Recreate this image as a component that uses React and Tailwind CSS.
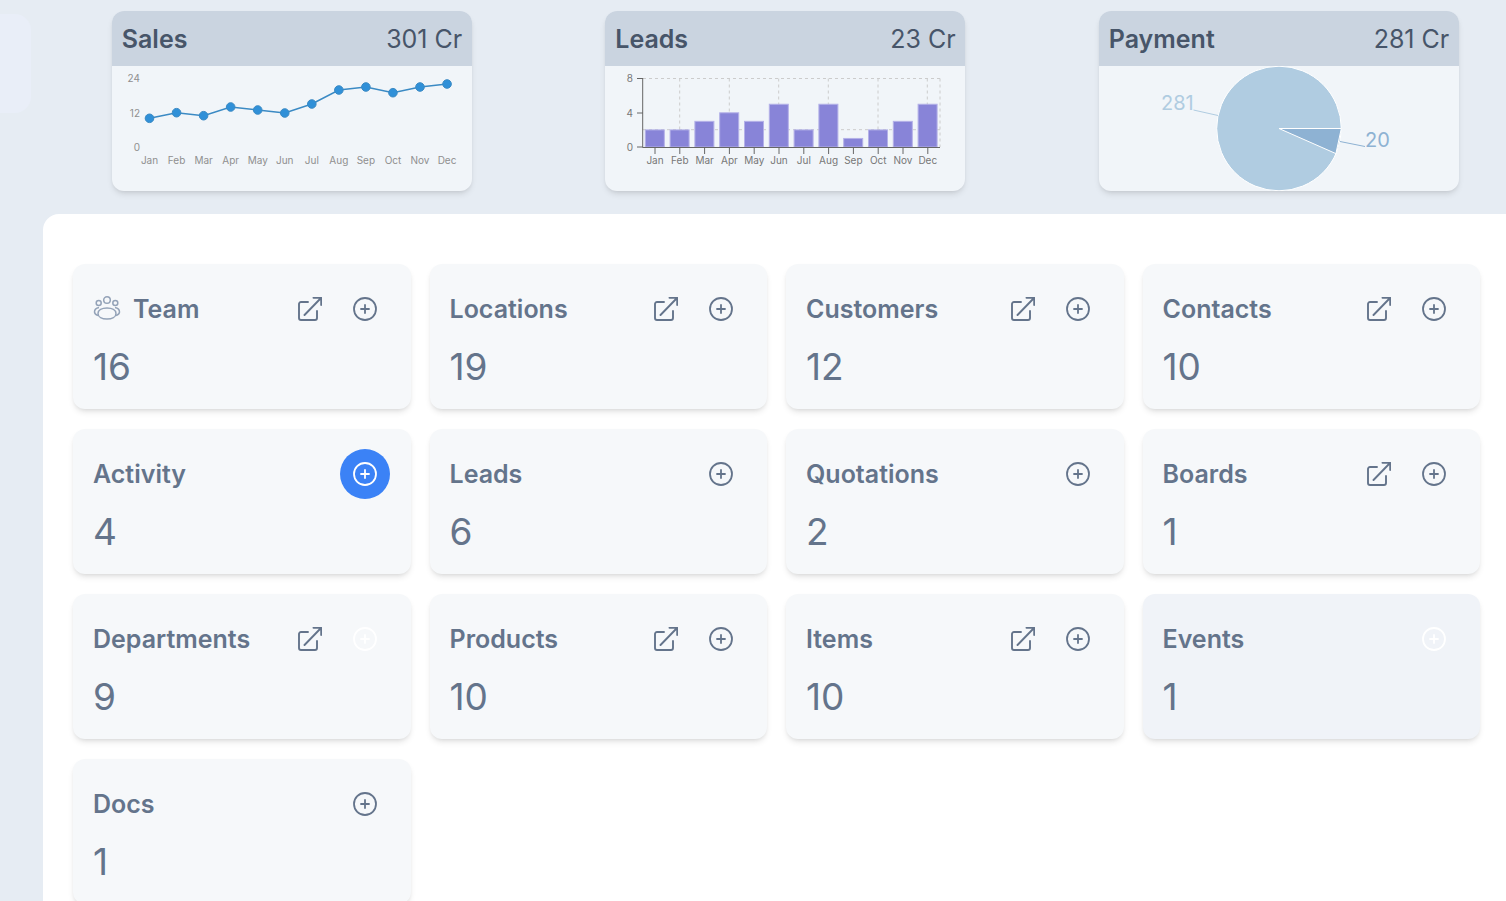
import React from "react";

const months = ["Jan", "Feb", "Mar", "Apr", "May", "Jun", "Jul", "Aug", "Sep", "Oct", "Nov", "Dec"];
const sales = [118.3, 112.7, 115.7, 107, 110, 113, 104, 90, 87, 92.7, 87, 84];
const leads = [2, 2, 3, 4, 3, 5, 2, 5, 1, 2, 3, 5];

const cards = [
  { title: "Team", count: 16, edit: true, team: true },
  { title: "Locations", count: 19, edit: true },
  { title: "Customers", count: 12, edit: true },
  { title: "Contacts", count: 10, edit: true },
  { title: "Activity", count: 4, active: true },
  { title: "Leads", count: 6 },
  { title: "Quotations", count: 2 },
  { title: "Boards", count: 1, edit: true },
  { title: "Departments", count: 9, edit: true, faded: true },
  { title: "Products", count: 10, edit: true },
  { title: "Items", count: 10, edit: true },
  { title: "Events", count: 1, faded: true, dim: true },
  { title: "Docs", count: 1 },
];

const PlusCircle = () => (
  <svg viewBox="0 0 24 24" fill="none" stroke="currentColor" strokeWidth="1.8" strokeLinecap="round" className="w-6 h-6">
    <circle cx="12" cy="12" r="11" />
    <path d="M12 8v8M8 12h8" />
  </svg>
);

const EditIcon = () => (
  <svg viewBox="0 0 24 24" fill="none" stroke="currentColor" strokeWidth="1.9" strokeLinecap="round" strokeLinejoin="round" className="w-6 h-6">
    <path d="M10 5H3a2 2 0 0 0-2 2v14a2 2 0 0 0 2 2h14a2 2 0 0 0 2-2v-7" />
    <path d="M6.500 18 23 1M15.500 .8H23.200V8" />
  </svg>
);

const TeamIcon = () => (
  <svg viewBox="0 0 28 24" fill="none" stroke="currentColor" strokeWidth="1.5" className="w-7 h-6 text-[#94a3b8] overflow-visible">
    <circle cx="14" cy="3" r="3.300" />
    <circle cx="5.700" cy="6" r="2.500" />
    <circle cx="22.300" cy="6" r="2.500" />
    <path d="M5 16.500c0-3.500 4-5.500 9-5.500s9 2 9 5.500-4 5.500-9 5.500-9-2-9-5.500Z" />
    <path d="M6 10.500C3.500 11 1.500 13 1.500 15c0 1.500 1.300 2.700 3.500 3.500M22 10.500c2.500.5 4.500 2.500 4.500 4.500 0 1.500-1.300 2.700-3.500 3.500" />
  </svg>
);

const ChartCard = ({ title, value, children }) => (
  <div className="w-[360px] h-[180px] shrink-0 rounded-xl bg-[#f1f5f9] shadow-md overflow-hidden">
    <div className="h-[55px] bg-[#cad4e0] flex items-center justify-between pl-[10px] pr-[9.500px] pt-0.5 text-[#475569] text-[25px]">
      <span className="font-semibold">{title}</span>
      <span>{value}</span>
    </div>
    {children}
  </div>
);

// svg coordinates are page pixels minus the card origin
const SalesChart = () => {
  const pts = sales.map((y, i) => [37.5 + i * 27.05, y - 66]);
  return (
    <svg width="360" height="125" className="block font-[Inter]">
      {[["24", 12], ["12", 47], ["0", 81]].map(([t, y]) => (
        <text key={t} x="28" y={y + 3.500} textAnchor="end" fontSize="10" fill="#8f8f8f">{t}</text>
      ))}
      <polyline points={pts.map((p) => p.join(",")).join(" ")} fill="none" stroke="#3b8ac4" strokeWidth="1.500" />
      {pts.map(([x, y], i) => (
        <g key={i}>
          <circle cx={x} cy={y} r="4.300" fill="#3090d8" stroke="#3b8ac4" />
          <text x={x} y="98" textAnchor="middle" fontSize="10" fill="#8f8f8f">{months[i]}</text>
        </g>
      ))}
    </svg>
  );
};

const LeadsChart = () => {
  const base = 81;
  const unit = 8.55;
  const grid = [74.700, 124.300, 173.700, 223.300, 273, 322.300, 335];
  return (
    <svg width="360" height="125" className="block font-[Inter]">
      <g stroke="#ccc" strokeDasharray="3 3" fill="none">
        <path d={`M38 12.500H335M38 63.700H335`} />
        {grid.map((x) => <path key={x} d={`M${x} 12.500V81`} />)}
      </g>
      {leads.map((v, i) => (
        <rect key={i} x={40.300 + i * 24.800} y={base - v * unit} width="19" height={v * unit} fill="#8884d8" stroke="#b4b1e8" strokeWidth="1" />
      ))}
      <path d="M37.700 12V81.500H335" stroke="#666" fill="none" />
      {[["8", 12.500], ["4", 47], ["0", 81]].map(([t, y]) => (
        <g key={t}>
          <path d={`M32 ${y}H38`} stroke="#666" />
          <text x="28" y={y + 3.500} textAnchor="end" fontSize="10" fill="#777">{t}</text>
        </g>
      ))}
      {months.map((m, i) => (
        <g key={m}>
          <path d={`M${50 + i * 24.800} 81V88`} stroke="#666" />
          <text x={50 + i * 24.800} y="98" textAnchor="middle" fontSize="10" fill="#777">{m}</text>
        </g>
      ))}
    </svg>
  );
};

const PaymentChart = () => (
  <svg width="360" height="125" className="block font-[Inter]">
    <circle cx="180" cy="62.500" r="62.300" fill="#b0cce1" stroke="#fff" />
    <path d="M180 62.500H242.300L236.900 87.600Z" fill="#8eb2d3" stroke="#fff" strokeWidth="1" />
    <path d="M94.500 44 119 49.500" stroke="#b0cce1" fill="none" />
    <path d="M241 75.500 266 80.500" stroke="#8eb2d3" fill="none" />
    <text x="62" y="44" fontSize="20" fill="#b0cce1">281</text>
    <text x="266" y="81" fontSize="20" fill="#8eb2d3">20</text>
  </svg>
);

const StatCard = ({ title, count, edit, team, active, faded, dim }) => (
  <div className={`h-[145px] rounded-xl shadow-md pl-5 pr-[21px] pt-5 ${dim ? "bg-[#f0f3f8]" : "bg-[#f6f8fa]"}`}>
    <div className="flex items-center h-[50px]">
      {team && <span className="mr-3"><TeamIcon /></span>}
      <span className="flex-1 mt-0.5 text-[25px] font-semibold text-[#64748b] whitespace-nowrap">{title}</span>
      <div className="flex gap-[5px]">
        {edit && <button className="p-[13px] rounded-full text-[#64748b]"><EditIcon /></button>}
        <button className={`p-[13px] rounded-full ${active ? "bg-[#3b82f6] text-white" : faded ? "text-white" : "text-[#64748b]"}`}>
          <PlusCircle />
        </button>
      </div>
    </div>
    <div className="mt-[13px] text-[37px] leading-10 text-[#64748b]">{count}</div>
  </div>
);

export default function App() {
  return (
    <div className="h-screen overflow-hidden flex bg-[#e6ecf3] font-[Inter]">
      <aside className="w-[43px] shrink-0 pt-[14px]">
        <div className="w-[31px] h-[99px] rounded-r-2xl bg-[#e9eef8]"></div>
      </aside>
      <main className="flex-1 min-w-0 flex flex-col">
        <div className="h-[214px] shrink-0 pt-[11px] pl-[68.750px] flex gap-[133.500px]">
          <ChartCard title="Sales" value="301 Cr"><SalesChart /></ChartCard>
          <ChartCard title="Leads" value="23 Cr"><LeadsChart /></ChartCard>
          <ChartCard title="Payment" value="281 Cr"><PaymentChart /></ChartCard>
        </div>
        <div className="flex-1 bg-white rounded-tl-2xl pt-[50px] pl-[30px] pr-[26px]">
          <div className="grid grid-cols-4 gap-x-[19px] gap-y-5">
            {cards.map((c) => <StatCard key={c.title} {...c} />)}
          </div>
        </div>
      </main>
    </div>
  );
}
